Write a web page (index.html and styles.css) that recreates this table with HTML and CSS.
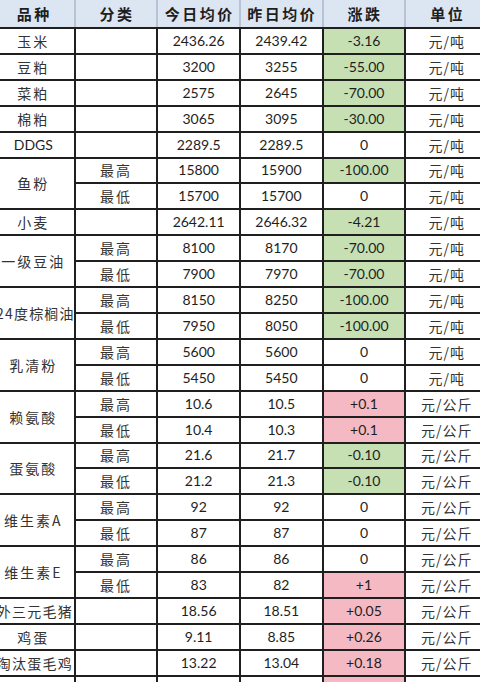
FILE: index.html
```html
<!DOCTYPE html>
<html lang="zh">
<head>
<meta charset="utf-8">
<link rel="stylesheet" href="styles.css">
</head>
<body>
<div class="sheet">
<table class="price">
  <thead>
    <tr><th>品种</th><th>分类</th><th>今日均价</th><th>昨日均价</th><th>涨跌</th><th>单位</th></tr>
  </thead>
  <tbody>
    <tr><td class="name">玉米</td><td></td><td class="num">2436.26</td><td class="num">2439.42</td><td class="num down">-3.16</td><td class="unit">元/吨</td></tr>
    <tr><td class="name">豆粕</td><td></td><td class="num">3200</td><td class="num">3255</td><td class="num down">-55.00</td><td class="unit">元/吨</td></tr>
    <tr><td class="name">菜粕</td><td></td><td class="num">2575</td><td class="num">2645</td><td class="num down">-70.00</td><td class="unit">元/吨</td></tr>
    <tr><td class="name">棉粕</td><td></td><td class="num">3065</td><td class="num">3095</td><td class="num down">-30.00</td><td class="unit">元/吨</td></tr>
    <tr><td class="name latin">DDGS</td><td></td><td class="num">2289.5</td><td class="num">2289.5</td><td class="num">0</td><td class="unit">元/吨</td></tr>
    <tr><td class="name" rowspan="2">鱼粉</td><td class="cat">最高</td><td class="num">15800</td><td class="num">15900</td><td class="num down">-100.00</td><td class="unit">元/吨</td></tr>
    <tr><td class="cat">最低</td><td class="num">15700</td><td class="num">15700</td><td class="num">0</td><td class="unit">元/吨</td></tr>
    <tr><td class="name">小麦</td><td></td><td class="num">2642.11</td><td class="num">2646.32</td><td class="num down">-4.21</td><td class="unit">元/吨</td></tr>
    <tr><td class="name" rowspan="2">一级豆油</td><td class="cat">最高</td><td class="num">8100</td><td class="num">8170</td><td class="num down">-70.00</td><td class="unit">元/吨</td></tr>
    <tr><td class="cat">最低</td><td class="num">7900</td><td class="num">7970</td><td class="num down">-70.00</td><td class="unit">元/吨</td></tr>
    <tr><td class="name long" rowspan="2">24度棕榈油</td><td class="cat">最高</td><td class="num">8150</td><td class="num">8250</td><td class="num down">-100.00</td><td class="unit">元/吨</td></tr>
    <tr><td class="cat">最低</td><td class="num">7950</td><td class="num">8050</td><td class="num down">-100.00</td><td class="unit">元/吨</td></tr>
    <tr><td class="name" rowspan="2">乳清粉</td><td class="cat">最高</td><td class="num">5600</td><td class="num">5600</td><td class="num">0</td><td class="unit">元/吨</td></tr>
    <tr><td class="cat">最低</td><td class="num">5450</td><td class="num">5450</td><td class="num">0</td><td class="unit">元/吨</td></tr>
    <tr><td class="name" rowspan="2">赖氨酸</td><td class="cat">最高</td><td class="num">10.6</td><td class="num">10.5</td><td class="num up">+0.1</td><td class="unit">元/公斤</td></tr>
    <tr><td class="cat">最低</td><td class="num">10.4</td><td class="num">10.3</td><td class="num up">+0.1</td><td class="unit">元/公斤</td></tr>
    <tr><td class="name" rowspan="2">蛋氨酸</td><td class="cat">最高</td><td class="num">21.6</td><td class="num">21.7</td><td class="num down">-0.10</td><td class="unit">元/公斤</td></tr>
    <tr><td class="cat">最低</td><td class="num">21.2</td><td class="num">21.3</td><td class="num down">-0.10</td><td class="unit">元/公斤</td></tr>
    <tr><td class="name" rowspan="2">维生素A</td><td class="cat">最高</td><td class="num">92</td><td class="num">92</td><td class="num">0</td><td class="unit">元/公斤</td></tr>
    <tr><td class="cat">最低</td><td class="num">87</td><td class="num">87</td><td class="num">0</td><td class="unit">元/公斤</td></tr>
    <tr><td class="name" rowspan="2">维生素E</td><td class="cat">最高</td><td class="num">86</td><td class="num">86</td><td class="num">0</td><td class="unit">元/公斤</td></tr>
    <tr><td class="cat">最低</td><td class="num">83</td><td class="num">82</td><td class="num up">+1</td><td class="unit">元/公斤</td></tr>
    <tr><td class="name long">外三元毛猪</td><td></td><td class="num">18.56</td><td class="num">18.51</td><td class="num up">+0.05</td><td class="unit">元/公斤</td></tr>
    <tr><td class="name">鸡蛋</td><td></td><td class="num">9.11</td><td class="num">8.85</td><td class="num up">+0.26</td><td class="unit">元/公斤</td></tr>
    <tr><td class="name long">淘汰蛋毛鸡</td><td></td><td class="num">13.22</td><td class="num">13.04</td><td class="num up">+0.18</td><td class="unit">元/公斤</td></tr>
    <tr><td class="name">白条鸡</td><td></td><td class="num">14.50</td><td class="num">14.40</td><td class="num up">+0.10</td><td class="unit">元/公斤</td></tr>
  </tbody>
</table>
</div>
</body>
</html>
```

FILE: styles.css
```css
html, body {
  margin: 0;
  padding: 0;
  background: #ffffff;
}

body {
  width: 480px;
  height: 682px;
  overflow: hidden;
}

.sheet {
  margin-left: -9px;
  width: 498px;
}

.price {
  width: 498px;
  table-layout: fixed;
  border-collapse: collapse;
  color: #1e1e1e;
}

.price th,
.price td {
  border: 2px solid #1f1f1f;
  padding: 0;
  text-align: center;
  vertical-align: middle;
  white-space: nowrap;
  overflow: hidden;
}

.price thead th {
  height: 27px;
  background: #dce6f2;
  border-top: none;
  border-color: #b8c2d4;
  border-bottom: 2px solid #1f1f1f;
  font-family: "Noto Sans CJK SC", sans-serif;
  font-weight: 700;
  font-size: 15px;
  letter-spacing: 2.5px;
  line-height: 27px;
  padding-left: 2px;
}

.price tbody td {
  height: 23.92px;
  line-height: 20px;
}

.name,
.cat,
.unit {
  font-family: "Noto Sans CJK SC", sans-serif;
  font-size: 14px;
  letter-spacing: 2px;
  color: #333333;
  padding-left: 2px;
}

.price tbody .long {
  letter-spacing: 1.2px;
  padding-left: 0;
  text-indent: 3px;
}

.latin {
  font-family: "Lato", "Noto Sans", sans-serif;
  font-size: 14px;
  letter-spacing: 0;
  color: #1e1e1e;
}

.unit {
  letter-spacing: 1px;
  font-size: 14px;
}

.num {
  font-family: "Lato", "Noto Sans", sans-serif;
  font-size: 14px;
  color: #1e1e1e;
}

.down {
  background: #c6e0b4;
}

.up {
  background: #f4b9c3;
}
```
